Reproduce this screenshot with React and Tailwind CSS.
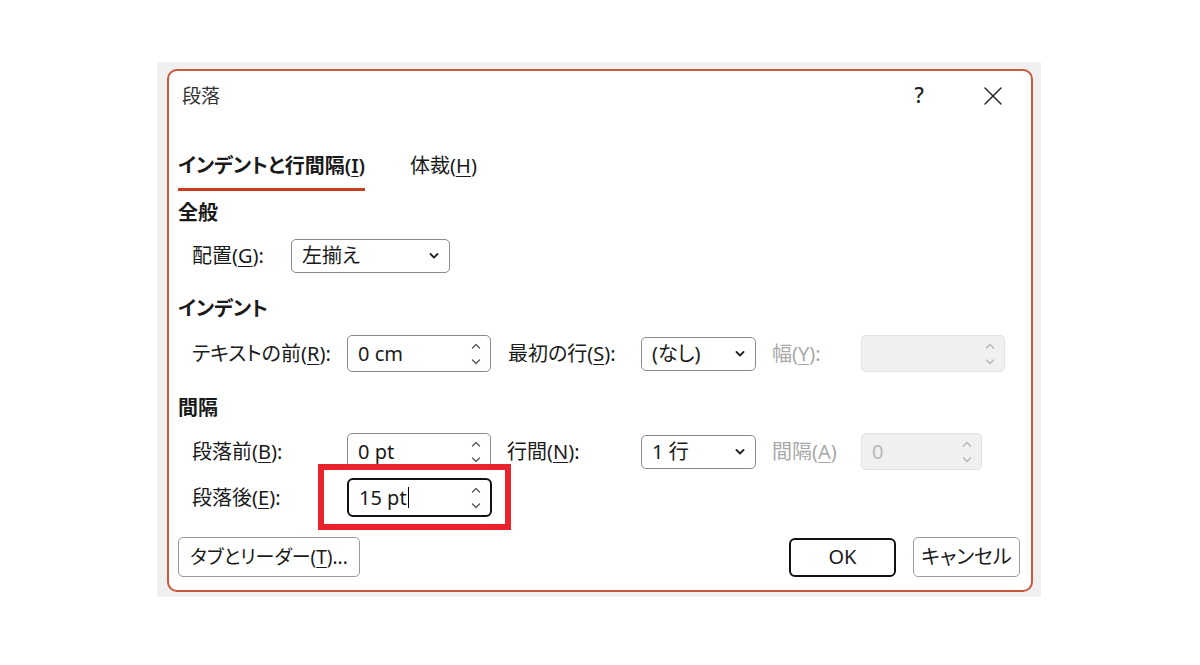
import React from 'react';

// underlined access key letter
const Key = ({ children }) => (
  <span className="underline underline-offset-[3px] decoration-1">{children}</span>
);

const SpinArrows = ({ color = '#555' }) => (
  <svg width="10" height="22" viewBox="0 0 10 22" fill="none" stroke={color} strokeWidth="1.3" strokeLinecap="round" strokeLinejoin="round">
    <path d="M1.5 5 L5 1.5 L8.5 5" />
    <path d="M1.5 17 L5 20.5 L8.5 17" />
  </svg>
);

const Chevron = () => (
  <svg width="10" height="6" viewBox="0 0 10 6" fill="none" stroke="#222" strokeWidth="1.8" strokeLinecap="round" strokeLinejoin="round">
    <path d="M1.5 1 L5 4.5 L8.5 1" />
  </svg>
);

const Spinner = ({ value, width = 'w-[144px]' }) => (
  <div className={`${width} h-[37px] flex items-center justify-between pl-[10px] pr-[9px] bg-white border border-[#8a8a8a] rounded-[5px] text-[#1a1a1a]`}>
    <span>{value}</span>
    <SpinArrows />
  </div>
);

const DisabledSpinner = ({ value, width }) => (
  <div className={`${width} h-[37px] flex items-center justify-between pl-[10px] pr-[9px] bg-[#f0f0f0] border border-[#e2e2e2] rounded-[5px] text-[#b8b8b8]`}>
    <span>{value}</span>
    <SpinArrows color="#b5b5b5" />
  </div>
);

const Select = ({ value, width }) => (
  <div className={`${width} h-[34px] flex items-center justify-between pl-[10px] pr-[10px] bg-white border border-[#8a8a8a] rounded-[5px] text-[#1a1a1a]`}>
    <span>{value}</span>
    <Chevron />
  </div>
);

export default function App() {
  return (
    <div className="w-[1200px] h-[665px] bg-white pt-[62px] pl-[157px] font-['Noto_Sans','Noto_Sans_CJK_JP',sans-serif] text-[20px] [font-feature-settings:'palt'] text-[#1a1a1a]">
      <div className="w-[884px] h-[535px] bg-[#f0f0f0] pt-[7px] pl-[10px]">
        <div className="w-[866px] h-[523px] bg-white border-2 border-[#c9583c] rounded-[10px] flex flex-col">
          {/* title bar */}
          <div className="h-[50px] flex items-center pl-[13px] pr-[29px] shrink-0">
            <span className="text-[#333] text-[19px]">段落</span>
            <span className="ml-auto text-[#222] text-[21px] font-medium">?</span>
            <svg className="ml-[60px]" width="18" height="18" viewBox="0 0 18 18" fill="none" stroke="#222" strokeWidth="1.4" strokeLinecap="round">
              <path d="M1 1 L17 17" />
              <path d="M17 1 L1 17" />
            </svg>
          </div>

          <div className="flex flex-col pl-[9px] flex-1">
            {/* tabs */}
            <div className="h-[70px] flex items-end gap-[45px] shrink-0">
              <div className="leading-[24px] pb-[10px] border-b-[3px] border-[#c43e1c] font-semibold">
                インデントと行間隔(<Key>I</Key>)
              </div>
              <div className="leading-[24px] pb-[10px] border-b-[3px] border-transparent">
                体裁(<Key>H</Key>)
              </div>
            </div>

            <div className="mt-[10px] leading-[24px] font-bold">全般</div>
            <div className="mt-[14px] pl-[14px] flex items-center h-[34px]">
              <span className="w-[99px]">配置(<Key>G</Key>):</span>
              <Select value="左揃え" width="w-[159px]" />
            </div>

            <div className="mt-[24px] leading-[24px] font-bold">インデント</div>
            <div className="mt-[14px] pl-[14px] flex items-center h-[37px]">
              <span className="w-[155px]">テキストの前(<Key>R</Key>):</span>
              <Spinner value="0 cm" />
              <span className="ml-[17px] w-[133px]">最初の行(<Key>S</Key>):</span>
              <Select value="(なし)" width="w-[115px]" />
              <span className="ml-[16px] w-[89px] text-[#a8a8a8]">幅(<Key>Y</Key>):</span>
              <DisabledSpinner value="" width="w-[144px]" />
            </div>

            <div className="mt-[24px] leading-[24px] font-bold">間隔</div>
            <div className="mt-[13px] pl-[14px] flex items-center h-[37px]">
              <span className="w-[155px]">段落前(<Key>B</Key>):</span>
              <Spinner value="0 pt" />
              <span className="ml-[16px] w-[134px]">行間(<Key>N</Key>):</span>
              <Select value="1 行" width="w-[115px]" />
              <span className="ml-[16px] w-[89px] text-[#a8a8a8]">間隔(<Key>A</Key>)</span>
              <DisabledSpinner value="0" width="w-[121px]" />
            </div>

            <div className="mt-[8px] pl-[14px] flex items-center h-[39px]">
              <span className="w-[155px]">段落後(<Key>E</Key>):</span>
              <div className="relative">
                <div className="w-[145px] h-[39px] flex items-center justify-between pl-[10px] pr-[9px] bg-white border-2 border-[#111] rounded-[6px]">
                  <span className="flex items-center">
                    15 pt<span className="inline-block w-px h-[21px] bg-black ml-px" />
                  </span>
                  <SpinArrows />
                </div>
                {/* highlight frame */}
                <div className="absolute -left-[29px] -top-[14px] w-[193px] h-[66px] border-[6px] border-[#e8232b]" />
              </div>
            </div>

            {/* footer buttons */}
            <div className="mt-auto mb-[13px] flex items-center">
              <button className="w-[182px] h-[40px] border border-[#9a9a9a] rounded-[5px] bg-white text-[19px]">
                タブとリーダー(<Key>T</Key>)...
              </button>
              <button className="ml-auto w-[107px] h-[39px] border-2 border-[#111] rounded-[6px] bg-white">
                OK
              </button>
              <button className="ml-[17px] mr-[11px] w-[107px] h-[40px] border border-[#9a9a9a] rounded-[5px] bg-white">
                キャンセル
              </button>
            </div>
          </div>
        </div>
      </div>
    </div>
  );
}
